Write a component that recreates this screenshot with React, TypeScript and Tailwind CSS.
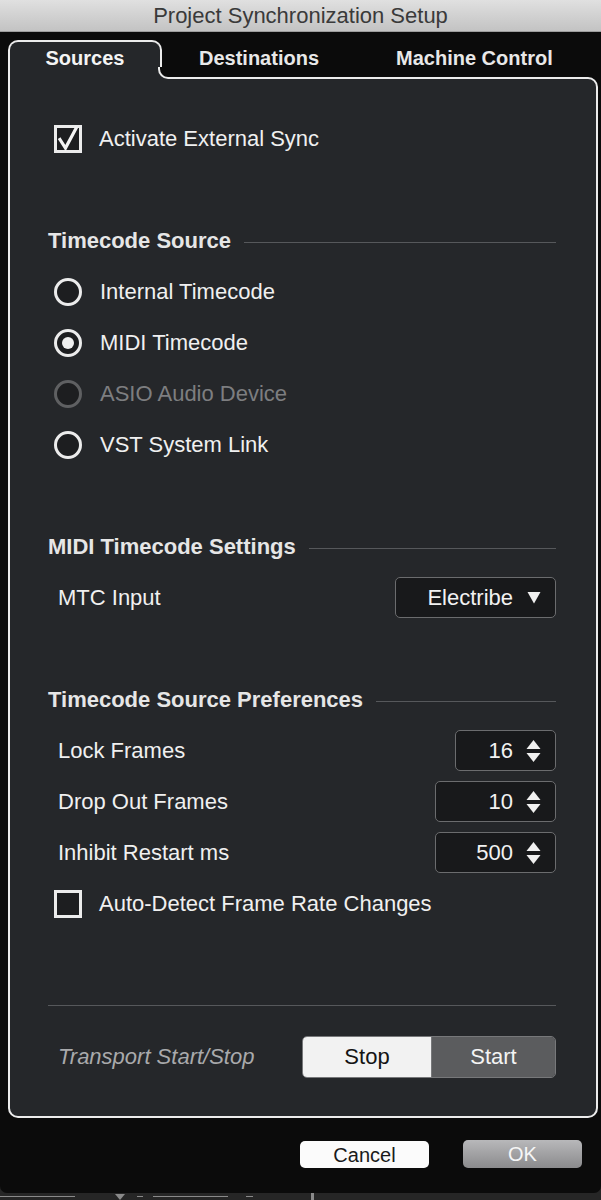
import React from "react";

const PANEL = "bg-[#25272a]";

function CheckBox({ checked }: { checked: boolean }) {
  return (
    <svg width="28" height="28" viewBox="0 0 28 28" className="shrink-0">
      <rect x="1.5" y="1.5" width="25" height="25" fill="#1d1e20" stroke="#ececec" strokeWidth="3" />
      {checked && (
        <path d="M6 14.5 L11.5 23 L22 3.5" fill="none" stroke="#f4f4f4" strokeWidth="3.2" strokeLinecap="square" strokeLinejoin="miter" />
      )}
    </svg>
  );
}

function Radio({ selected, disabled }: { selected?: boolean; disabled?: boolean }) {
  const c = disabled ? "#5f6062" : "#ececec";
  return (
    <svg width="30" height="30" viewBox="0 0 30 30" className="shrink-0">
      <circle cx="15" cy="15" r="12.5" fill="#1d1e20" stroke={c} strokeWidth="3" />
      {selected && <circle cx="15" cy="15" r="6" fill="#f0f0f0" />}
    </svg>
  );
}

function Heading({ text }: { text: string }) {
  return (
    <div className="h-[51px] flex items-center">
      <span className="text-[22px] font-bold text-[#e6e6e6] leading-none whitespace-nowrap">{text}</span>
      <div className="ml-[13px] flex-1 h-px bg-[#56585b] mt-[3px]" />
    </div>
  );
}

function Spinner({ value, width }: { value: string; width: string }) {
  return (
    <div className={`${width} h-[41px] bg-[#18191b] border border-[#6b6c6e] rounded-[5px] flex items-center justify-end pr-[14px]`}>
      <span className="text-[22px] text-[#f2f2f2] leading-none">{value}</span>
      <svg width="15" height="24" viewBox="0 0 15 24" className="ml-[13px]">
        <polygon points="0.5,10 7.5,1 14.5,10" fill="#f0f0f0" />
        <polygon points="0.5,14 14.5,14 7.5,23" fill="#f0f0f0" />
      </svg>
    </div>
  );
}

const Row = ({ children, className = "" }: { children?: React.ReactNode; className?: string }) => (
  <div className={`h-[51px] flex items-center ${className}`}>{children}</div>
);

export default function App() {
  return (
    <div className="w-[601px] h-[1200px] bg-[#262626] flex flex-col overflow-hidden font-['Liberation_Sans',Arial,sans-serif]">
      {/* Title bar */}
      <div className="h-[32px] shrink-0 bg-gradient-to-b from-[#e0e0e0] to-[#c3c3c3] border-b border-[#9d9d9d] flex items-center justify-center">
        <span className="text-[22px] text-[#3a3a3a] leading-none">Project Synchronization Setup</span>
      </div>

      {/* Dialog body */}
      <div className="h-[1161px] shrink-0 bg-[#0b0b0b] rounded-b-[7px] pl-[8px] pr-[3px] flex flex-col">
        {/* Tabs */}
        <div className="mt-[8px] h-[37px] flex items-end">
          <div className={`relative z-10 w-[154px] h-[39px] -mb-[2px] border-2 border-b-0 border-[#ececec] rounded-t-[10px] ${PANEL} flex items-center justify-center pb-[5px]`}>
            <span className="text-[20px] font-bold text-[#f4f4f4] leading-none">Sources</span>
            <div className={`absolute left-[calc(100%-2px)] bottom-0 w-[12px] h-[12px] ${PANEL}`}>
              <div className="w-full h-full bg-[#0b0b0b] border-l-2 border-b-2 border-[#ececec] rounded-bl-[10px]" />
            </div>
          </div>
          <div className="h-[37px] flex items-center pl-[37px] pb-[1px]">
            <span className="text-[20px] font-bold text-[#e8e8e8] leading-none">Destinations</span>
          </div>
          <div className="h-[37px] flex items-center pl-[77px] pb-[1px]">
            <span className="text-[20px] font-bold text-[#e8e8e8] leading-none">Machine Control</span>
          </div>
        </div>

        {/* Panel */}
        <div className={`${PANEL} border-2 border-[#ececec] rounded-[10px] rounded-tl-none pl-[38px] pr-[40px] pt-[34px] pb-[34px] flex flex-col`}>
          <Row className="pl-[6px]">
            <CheckBox checked />
            <span className="ml-[17px] text-[22px] text-[#f0f0f0] leading-none">Activate External Sync</span>
          </Row>
          <Row />
          <Heading text="Timecode Source" />
          <Row className="pl-[5px]">
            <Radio />
            <span className="ml-[17px] text-[22px] text-[#f0f0f0] leading-none">Internal Timecode</span>
          </Row>
          <Row className="pl-[5px]">
            <Radio selected />
            <span className="ml-[17px] text-[22px] text-[#f0f0f0] leading-none">MIDI Timecode</span>
          </Row>
          <Row className="pl-[5px]">
            <Radio disabled />
            <span className="ml-[17px] text-[22px] text-[#7d7e80] leading-none">ASIO Audio Device</span>
          </Row>
          <Row className="pl-[5px]">
            <Radio />
            <span className="ml-[17px] text-[22px] text-[#f0f0f0] leading-none">VST System Link</span>
          </Row>
          <Row />
          <Heading text="MIDI Timecode Settings" />
          <Row className="justify-between pl-[10px]">
            <span className="text-[22px] text-[#f0f0f0] leading-none">MTC Input</span>
            <div className="w-[161px] h-[41px] bg-[#18191b] border border-[#6b6c6e] rounded-[5px] flex items-center justify-end pr-[14px]">
              <span className="text-[22px] text-[#f2f2f2] leading-none">Electribe</span>
              <svg width="14" height="13" viewBox="0 0 14 13" className="ml-[14px]">
                <polygon points="0.5,1 13.5,1 7,12.5" fill="#f0f0f0" />
              </svg>
            </div>
          </Row>
          <Row />
          <Heading text="Timecode Source Preferences" />
          <Row className="justify-between pl-[10px]">
            <span className="text-[22px] text-[#f0f0f0] leading-none">Lock Frames</span>
            <Spinner value="16" width="w-[101px]" />
          </Row>
          <Row className="justify-between pl-[10px]">
            <span className="text-[22px] text-[#f0f0f0] leading-none">Drop Out Frames</span>
            <Spinner value="10" width="w-[121px]" />
          </Row>
          <Row className="justify-between pl-[10px]">
            <span className="text-[22px] text-[#f0f0f0] leading-none">Inhibit Restart ms</span>
            <Spinner value="500" width="w-[121px]" />
          </Row>
          <Row className="pl-[6px]">
            <CheckBox checked={false} />
            <span className="ml-[17px] text-[22px] text-[#f0f0f0] leading-none">Auto-Detect Frame Rate Changes</span>
          </Row>
          <Row />
          <Row>
            <div className="w-full h-px bg-[#56585b]" />
          </Row>
          <Row className="justify-between pl-[10px]">
            <span className="text-[22px] italic text-[#a9aaac] leading-none">Transport Start/Stop</span>
            <div className="w-[254px] h-[42px] border border-[#77787a] rounded-[5px] overflow-hidden flex">
              <div className="w-[128px] bg-[#f2f2f2] flex items-center justify-center">
                <span className="text-[22px] text-[#141414] leading-none">Stop</span>
              </div>
              <div className="flex-1 bg-[#5b5c5e] border-l border-[#77787a] flex items-center justify-center">
                <span className="text-[22px] text-[#f4f4f4] leading-none">Start</span>
              </div>
            </div>
          </Row>
        </div>

        {/* Buttons */}
        <div className="mt-[22px] flex justify-end pr-[16px] gap-[34px]">
          <div className="w-[129px] h-[27px] bg-[#fbfbfb] rounded-[5px] flex items-center justify-center mt-[1px]">
            <span className="text-[20px] text-[#1a1a1a] leading-none">Cancel</span>
          </div>
          <div className="w-[119px] h-[28px] bg-gradient-to-b from-[#b8b8ba] to-[#8b8b8d] rounded-[5px] flex items-center justify-center">
            <span className="text-[20px] text-[#f6f6f6] leading-none">OK</span>
          </div>
        </div>
      </div>

      {/* Bottom strip behind dialog */}
      <div className="flex-1 flex items-center">
        <div className="w-[75px] h-px bg-[#8a8a8a]" />
        <svg width="10" height="6" viewBox="0 0 10 6" className="ml-[40px]">
          <polygon points="0,0 10,0 5,6" fill="#8a8a8a" />
        </svg>
        <div className="ml-[12px] w-[6px] h-px bg-[#8a8a8a]" />
        <div className="ml-[10px] w-[75px] h-px bg-[#8a8a8a]" />
        <div className="ml-[18px] w-[7px] h-px bg-[#8a8a8a]" />
        <div className="ml-[58px] w-[3px] h-[7px] bg-[#8a8a8a]" />
      </div>
    </div>
  );
}
